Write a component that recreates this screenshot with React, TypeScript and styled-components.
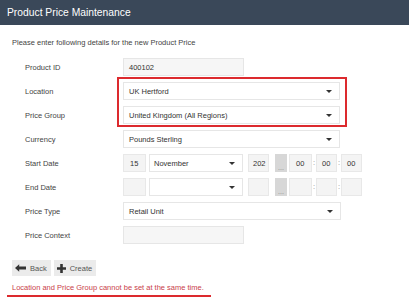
import React from 'react';
import styled, { createGlobalStyle } from 'styled-components';

const Global = createGlobalStyle`
  html, body { margin: 0; padding: 0; background: #fff; }
  body {
    font-family: "Liberation Sans", Arial, sans-serif;
    width: 409px;
    height: 303px;
    overflow: hidden;
    color: #444;
  }
  * { box-sizing: border-box; }
`;

const Header = styled.header`
  height: 25px;
  background: #3a4859;
  color: #fff;
  display: flex;
  align-items: center;
  padding-left: 7px;
  font-size: 10.3px;
`;

const Main = styled.main`
  padding-left: 12px;
`;

const Intro = styled.p`
  margin: 0;
  padding-top: 13px;
  font-size: 7.5px;
  line-height: 10px;
  color: #444;
`;

const Form = styled.div`
  position: relative;
  margin-top: 10px;
  padding-left: 13px;
  display: grid;
  grid-template-columns: 98px 1fr;
  grid-auto-rows: 18px;
  row-gap: 6px;
  align-items: center;
`;

const Label = styled.div`
  font-size: 7.5px;
  color: #444;
`;

const Field = styled.div<{ $w: number; $fill?: boolean }>`
  width: ${(p) => p.$w}px;
  height: 18px;
  display: flex;
  align-items: center;
  padding-left: 5px;
  font-size: 7.5px;
  color: #333;
  background: ${(p) => (p.$fill ? '#f6f6f6' : '#fff')};
  border: 1px solid #e6e6e6;
`;

const Select = styled(Field)`
  justify-content: space-between;
  padding-right: 7px;
`;

const Caret = styled.span`
  width: 0;
  height: 0;
  border-left: 3px solid transparent;
  border-right: 3px solid transparent;
  border-top: 3.5px solid #333;
`;

const DateRow = styled.div`
  display: flex;
  align-items: center;
  height: 18px;
`;

const Box = styled.div<{ $w: number; $ml?: number; $pl?: number }>`
  width: ${(p) => p.$w}px;
  height: 18px;
  margin-left: ${(p) => p.$ml ?? 0}px;
  padding-left: ${(p) => p.$pl ?? 5}px;
  display: flex;
  align-items: center;
  font-size: 7.5px;
  color: #333;
  background: #f4f4f4;
  border: 1px solid #e8e8e8;
`;

const MonthSelect = styled(Select)`
  margin-left: 3px;
  padding-left: 4px;
`;

const Dots = styled.div`
  width: 12px;
  height: 18px;
  margin-left: 6px;
  margin-right: 2px;
  background: #d7d7d7;
  color: #8a8a8a;
  font-size: 7px;
  line-height: 7px;
  text-align: center;
  padding-top: 10px;
`;

const Colon = styled.span`
  width: 4px;
  text-align: center;
  font-size: 7.5px;
  line-height: 18px;
  color: #8a8a8a;
`;

const Highlight = styled.div`
  position: absolute;
  left: 105px;
  top: 19px;
  width: 230px;
  height: 50px;
  border: 2px solid #dc2a2e;
  pointer-events: none;
`;

const Buttons = styled.div`
  display: flex;
  gap: 3px;
  margin-top: 16px;
`;

const Button = styled.button`
  height: 16px;
  display: flex;
  align-items: center;
  gap: 4px;
  padding: 0 4px 0 3px;
  border: none;
  background: #ebebeb;
  font-family: inherit;
  font-size: 7.5px;
  color: #555;
  svg { display: block; }
`;

const Error = styled.div`
  margin-top: 7px;
  margin-left: -5px;
  width: 204px;
  padding: 0 0 2px 5px;
  font-size: 7.5px;
  line-height: 10px;
  color: #c9404a;
  border-bottom: 2px solid #dc2a2e;
`;

const ArrowLeft = () => (
  <svg width="11" height="8" viewBox="0 0 11 8">
    <path d="M0 4 L4.2 0.3 L4.2 2.4 L11 2.4 L11 5.6 L4.2 5.6 L4.2 7.7 Z" fill="#333" />
  </svg>
);

const Plus = () => (
  <svg width="9" height="9" viewBox="0 0 9 9">
    <path d="M3.2 0 H5.8 V3.2 H9 V5.8 H5.8 V9 H3.2 V5.8 H0 V3.2 H3.2 Z" fill="#333" />
  </svg>
);

export default function App() {
  return (
    <>
      <Global />
      <Header>Product Price Maintenance</Header>
      <Main>
        <Intro>Please enter following details for the new Product Price</Intro>
        <Form>
          <Label>Product ID</Label>
          <Field $w={121} $fill>400102</Field>

          <Label>Location</Label>
          <Select $w={217}>UK Hertford<Caret /></Select>

          <Label>Price Group</Label>
          <Select $w={217}>United Kingdom (All Regions)<Caret /></Select>

          <Label>Currency</Label>
          <Select $w={217}>Pounds Sterling<Caret /></Select>

          <Label>Start Date</Label>
          <DateRow>
            <Box $w={23} $pl={6}>15</Box>
            <MonthSelect $w={94}>November<Caret /></MonthSelect>
            <Box $w={21} $ml={5} $pl={4}>202</Box>
            <Dots>...</Dots>
            <Box $w={23} $pl={6}>00</Box>
            <Colon>:</Colon>
            <Box $w={21} $pl={5}>00</Box>
            <Colon>:</Colon>
            <Box $w={21} $pl={5}>00</Box>
          </DateRow>

          <Label>End Date</Label>
          <DateRow>
            <Box $w={23} />
            <MonthSelect $w={94}><span /><Caret /></MonthSelect>
            <Box $w={21} $ml={5} />
            <Dots>...</Dots>
            <Box $w={23} />
            <Colon>:</Colon>
            <Box $w={21} />
            <Colon>:</Colon>
            <Box $w={21} />
          </DateRow>

          <Label>Price Type</Label>
          <Select $w={218}>Retail Unit<Caret /></Select>

          <Label>Price Context</Label>
          <Field $w={121} $fill />

          <Highlight />
        </Form>
        <Buttons>
          <Button><ArrowLeft />Back</Button>
          <Button><Plus />Create</Button>
        </Buttons>
        <Error>Location and Price Group cannot be set at the same time.</Error>
      </Main>
    </>
  );
}
